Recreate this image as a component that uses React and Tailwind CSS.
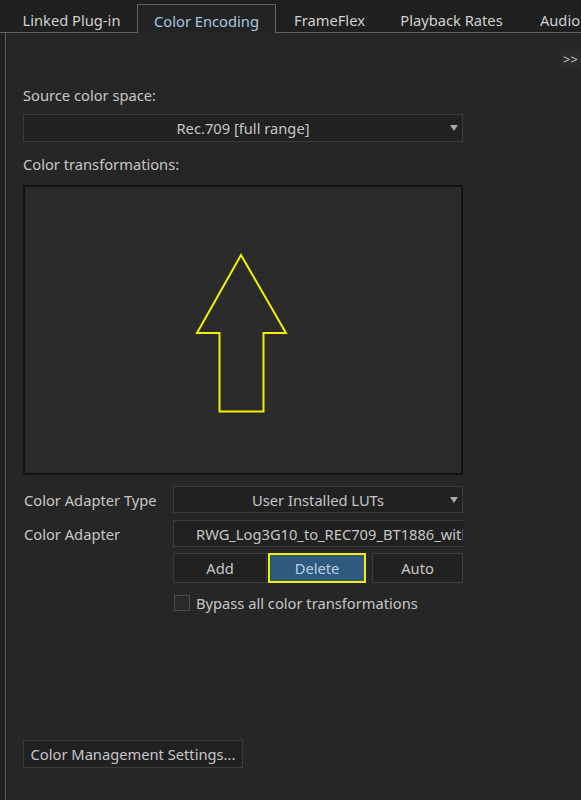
import React, { useState } from "react";

const tabs = [
  { label: "Linked Plug-in", width: "w-[131px]" },
  { label: "Color Encoding", width: "w-[139px]" },
  { label: "FrameFlex", width: "w-[107px]" },
  { label: "Playback Rates", width: "w-[137px]" },
  { label: "Audio", width: "w-[80px]" },
];

const DropArrow = () => (
  <svg width="8" height="6" viewBox="0 0 8 6" className="absolute right-[4px] top-1/2 -translate-y-1/2">
    <path d="M0 0 H8 L4 6 Z" fill="#a8a8a8" />
  </svg>
);

const Select = ({ value, className }) => (
  <div
    className={`relative flex items-center justify-center border border-[#3b3b3b] bg-[#212121] text-[#c6c6c6] ${className}`}
  >
    <span>{value}</span>
    <DropArrow />
  </div>
);

const Button = ({ children, className = "" }) => (
  <button className={`flex items-center justify-center border border-[#3a3a3a] bg-[#212121] text-[#c6c6c6] ${className}`}>
    {children}
  </button>
);

export default function App() {
  const [active, setActive] = useState(1);
  const [bypass, setBypass] = useState(false);

  return (
    <div
      className="w-[581px] h-[800px] overflow-hidden bg-[#1f1f1f] text-[14.7px] leading-5 text-[#c6c6c6]"
      style={{ fontFamily: '"Noto Sans", "Open Sans", sans-serif' }}
    >
      {/* tab strip */}
      <div className="flex h-[33px] items-end">
        <div className="w-[6px] shrink-0 h-full border-b border-[#646464]" />
        {tabs.map((t, i) =>
          i === active ? (
            <div
              key={t.label}
              className={`${t.width} h-[29px] shrink-0 flex items-center justify-center pt-[3px] border border-b-0 border-[#646464] bg-[#232323] text-[#abc6e0]`}
            >
              {t.label}
            </div>
          ) : (
            <div
              key={t.label}
              onClick={() => setActive(i)}
              className={`${t.width} h-[29px] shrink-0 flex items-center justify-center pt-[3px] border-b border-[#646464] text-[#d0d0d0] cursor-pointer`}
            >
              {t.label}
            </div>
          )
        )}
        <div className="flex-1 h-full border-b border-[#646464]" />
      </div>

      {/* panel body */}
      <div className="ml-[5px] h-[767px] border-l border-[#5e5e5e] bg-[#262626]">
        <div className="h-full border-l border-[#1a1a1a] pl-[16px]">
          <div className="flex justify-end pt-[16px]">
            <div className="w-[21px] h-[20px] flex items-center justify-center bg-[#2b2b2b] text-[13px] text-[#c8c8c8]">
              &gt;&gt;
            </div>
          </div>

          <div className="mt-[16px] w-[440px]">
            <div className="h-[20px] flex items-center">Source color space:</div>
            <Select value="Rec.709 [full range]" className="mt-[9px] h-[28px] w-[440px]" />

            <div className="mt-[12px] h-[20px] flex items-center">Color transformations:</div>
            <div className="mt-[11px] h-[290px] w-[440px] border-2 border-[#121212] bg-[#2b2b2b]">
              <svg width="436" height="286" viewBox="0 0 436 286" className="block">
                <path
                  d="M216 68 L172 146 L194.5 146 L194.5 224.5 L238.5 224.5 L238.5 146 L261 146 Z"
                  fill="none"
                  stroke="#f5f000"
                  strokeWidth="2"
                />
              </svg>
            </div>

            <div className="mt-[11px] flex items-center">
              <div className="w-[150px] pl-[1px]">Color Adapter Type</div>
              <Select value="User Installed LUTs" className="h-[27px] w-[290px]" />
            </div>

            <div className="mt-[7px] flex items-center">
              <div className="w-[150px] pl-[1px]">Color Adapter</div>
              <div className="h-[27px] w-[290px] flex items-center overflow-hidden whitespace-nowrap border border-r-0 border-[#3b3b3b] bg-[#212121] pl-[22px]">
                RWG_Log3G10_to_REC709_BT1886_with_LOW_CONTRAST_and_R_3_Soft_size_33
              </div>
            </div>

            <div className="mt-[6px] ml-[150px] flex items-center">
              <Button className="h-[30px] w-[94px]">Add</Button>
              <button className="ml-[1px] h-[30px] w-[98px] border-2 border-[#f2ee00] bg-[#2e5a7e] text-[#bdd0e2]">
                Delete
              </button>
              <Button className="ml-[6px] h-[30px] w-[91px]">Auto</Button>
            </div>

            <label className="mt-[12px] ml-[151px] h-[16px] flex items-center cursor-pointer">
              <span
                onClick={() => setBypass(!bypass)}
                className="w-[16px] h-[16px] border border-[#4c4c4c] bg-[#2a2a2a] flex items-center justify-center text-[11px]"
              >
                {bypass ? "✓" : ""}
              </span>
              <span className="ml-[6px]">Bypass all color transformations</span>
            </label>

            <Button className="mt-[129px] h-[28px] w-[220px] justify-center">Color Management Settings...</Button>
          </div>
        </div>
      </div>
    </div>
  );
}
